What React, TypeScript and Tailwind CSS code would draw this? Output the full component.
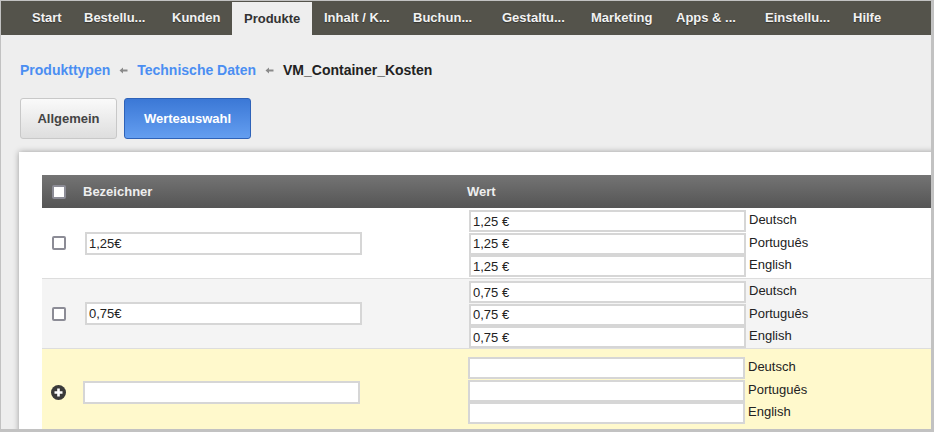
import React from 'react';

const navItems = [
  { label: 'Start', w: 'w-[52px]' },
  { label: 'Bestellu...', w: 'w-[88px]' },
  { label: 'Kunden', w: 'w-[72px]' },
  { label: 'Produkte', w: 'w-[80px]' },
  { label: 'Inhalt / K...', w: 'w-[89px]' },
  { label: 'Buchun...', w: 'w-[89px]' },
  { label: 'Gestaltu...', w: 'w-[89px]' },
  { label: 'Marketing', w: 'w-[85px]' },
  { label: 'Apps & ...', w: 'w-[89px]' },
  { label: 'Einstellu...', w: 'w-[88px]' },
  { label: 'Hilfe', w: 'w-[60px]' },
];

const languages = ['Deutsch', 'Português', 'English'];

type Row = { name: string; values: string[] };

const rows: Row[] = [
  { name: '1,25€', values: ['1,25 €', '1,25 €', '1,25 €'] },
  { name: '0,75€', values: ['0,75 €', '0,75 €', '0,75 €'] },
];

const Checkbox = () => (
  <span className="block w-[14px] h-[14px] rounded-[2px] border-2 border-[#8c8c96] bg-white" />
);

const Arrow = () => (
  <svg width="9" height="7" viewBox="0 0 9 7" className="mx-[9px] mt-[1px]">
    <path d="M0.5 3.5 L4 0.5 V2.6 H8.5 V4.4 H4 V6.5 Z" fill="#8a8a8a" />
  </svg>
);

const PlusIcon = () => (
  <svg width="15" height="15" viewBox="0 0 15 15">
    <circle cx="7.5" cy="7.5" r="7.5" fill="#3a3a3a" />
    <path d="M6.2 3.5h2.6v2.7h2.7v2.6H8.8v2.7H6.2V8.8H3.5V6.2h2.7z" fill="#fff" />
  </svg>
);

const ValueInputs = ({ values }: { values: string[] }) => (
  <div className="flex flex-col">
    {languages.map((lang, i) => (
      <div key={lang} className="flex items-start h-[22.5px]">
        <input
          defaultValue={values[i]}
          className="w-[277px] h-[22px] border-2 border-[#d6d6d6] bg-white px-[2px] text-[13px] text-[#222] outline-none"
        />
        <span className="ml-[3px] mt-[2px] text-[13px] leading-[15px] text-[#222]">{lang}</span>
      </div>
    ))}
  </div>
);

export default function App() {
  return (
    <div className="w-[934px] h-[432px] overflow-hidden border-l border-t border-r-[3px] border-b-[3px] border-[#c2c2c2] bg-[#eeeeee] font-['Liberation_Sans',Arial,sans-serif]">
      {/* top navigation */}
      <nav className="flex h-[34px] bg-[#54534b] pl-[19px]">
        {navItems.map((item) => {
          const active = item.label === 'Produkte';
          return (
            <div
              key={item.label}
              className={
                active
                  ? `${item.w} flex items-center pl-3 bg-[#eeeeee] text-[13px] font-bold text-[#333] mt-[1px] whitespace-nowrap`
                  : `${item.w} flex items-center pl-3 text-[13px] font-bold text-[#f2f2f2] whitespace-nowrap [text-shadow:0_1px_1px_rgba(0,0,0,0.4)]`
              }
            >
              {item.label}
            </div>
          );
        })}
      </nav>

      {/* breadcrumb */}
      <div className="flex items-center pl-[19px] pt-[26px] h-[44px] text-[14px] font-bold leading-[18px]">
        <span className="text-[#4b8ef2]">Produkttypen</span>
        <Arrow />
        <span className="text-[#4b8ef2]">Technische Daten</span>
        <Arrow />
        <span className="text-[#222]">VM_Container_Kosten</span>
      </div>

      {/* tabs */}
      <div className="flex gap-[7px] pl-[19px] pt-[19px]">
        <button className="w-[97px] h-[41px] rounded-[3px] border border-[#c8c8c8] bg-linear-to-b from-[#fafafa] to-[#dedede] text-[13px] font-bold text-[#444]">
          Allgemein
        </button>
        <button className="w-[127px] h-[41px] rounded-[3px] border border-[#2e62b8] bg-linear-to-b from-[#3b78d6] to-[#649ef0] text-[13px] font-bold text-white">
          Werteauswahl
        </button>
      </div>

      {/* panel */}
      <div className="mt-[13px] ml-[18px] w-[960px] h-[300px] bg-white pl-[23px] pt-[23px] shadow-[0_0_6px_rgba(0,0,0,0.35)]">
        <div className="w-[930px]">
          <div className="flex items-center h-[33px] bg-linear-to-b from-[#747474] to-[#555555] text-[13px] font-bold text-[#eeeeee]">
            <div className="flex items-center w-[425px] pl-[10px]">
              <span className="block w-[14px] h-[14px] rounded-[2px] border-2 border-[#8c8c96] bg-white" />
              <span className="ml-[17px]">Bezeichner</span>
            </div>
            <span>Wert</span>
          </div>

          {rows.map((row, idx) => (
            <div
              key={row.name}
              className={
                idx === 0
                  ? 'flex h-[70px] bg-white'
                  : 'flex h-[70px] bg-[#f4f4f4] border-t border-[#dddddd]'
              }
            >
              <div className="flex items-center w-[425px] pl-[10px]">
                <Checkbox />
                <input
                  defaultValue={row.name}
                  className="ml-[19px] w-[277px] h-[23px] border-2 border-[#d6d6d6] bg-white px-[2px] text-[13px] text-[#222] outline-none"
                />
              </div>
              <div className="pt-[2px] pl-[2px]">
                <ValueInputs values={row.values} />
              </div>
            </div>
          ))}

          <div className="flex h-[84px] bg-[#fff9cc] border-t border-[#dddddd]">
            <div className="flex items-center w-[425px] pl-[9px] pt-[4px]">
              <PlusIcon />
              <input className="ml-[17px] w-[277px] h-[23px] border-2 border-[#d6d6d6] bg-white outline-none" />
            </div>
            <div className="pt-[8px] pl-[1px]">
              <ValueInputs values={['', '', '']} />
            </div>
          </div>
        </div>
      </div>
    </div>
  );
}
